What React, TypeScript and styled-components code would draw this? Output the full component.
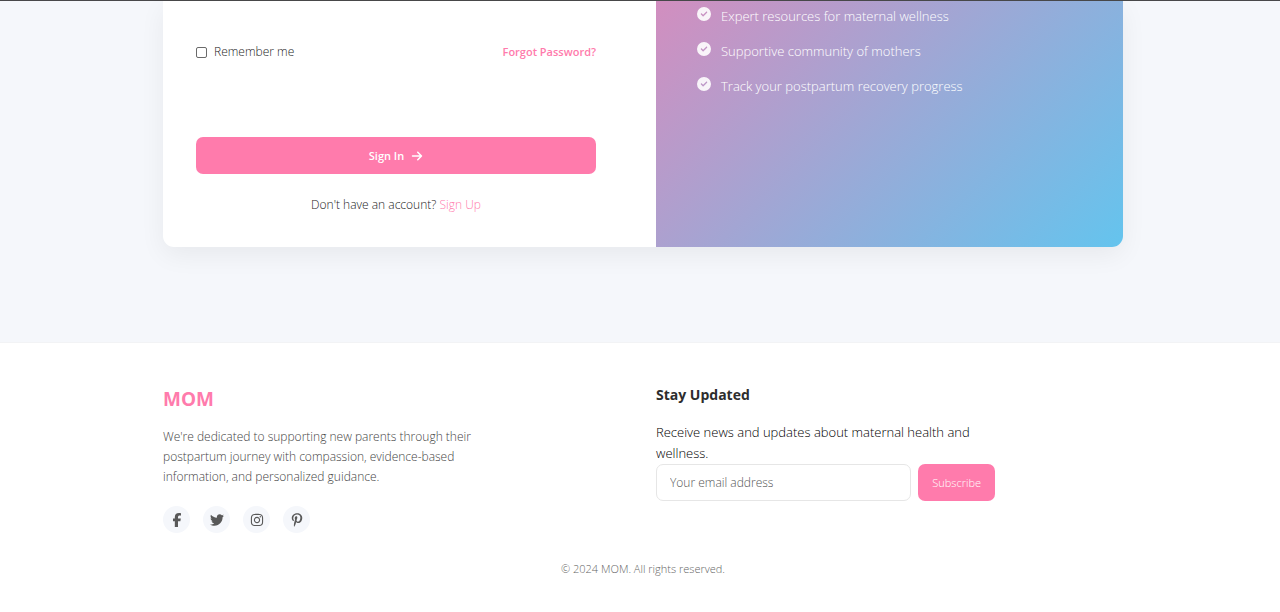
import React from "react";
import styled, { createGlobalStyle, css } from "styled-components";
import {
  FaArrowRight,
  FaCircleCheck,
  FaFacebookF,
  FaInstagram,
  FaPinterestP,
  FaTwitter,
} from "react-icons/fa6";

const pink = "#ff7bac";

const GlobalStyle = createGlobalStyle`
  *, *::before, *::after { box-sizing: border-box; }
  body {
    margin: 0;
    background: #f5f7fb;
    color: #1c1c1c;
    font: 300 13px/22px "Open Sans", "Noto Sans", sans-serif;
  }
  button, input { font: inherit; }
  a { text-decoration: none; }
`;

const Page = styled.div`
  border-top: 1px solid #48484a;
`;

const container = css`
  width: 75%;
  margin: 0 auto;
  position: relative;
  left: 3px;
`;

const Main = styled.main`
  padding-bottom: 95px;
`;

const Card = styled.section`
  ${container}
  display: grid;
  grid-template-columns: 1fr 1fr;
  gap: 26px;
  background: #fff;
  border-radius: 0 0 11px 11px;
  overflow: hidden;
  box-shadow: 0 8px 26px rgba(0, 0, 0, 0.06);
`;

const LoginForm = styled.form`
  padding: 41px 34px 32px 33px;
  font-size: 12px;
  line-height: 20px;
`;

const Options = styled.div`
  display: flex;
  justify-content: space-between;
  align-items: center;
  margin-bottom: 75px;
`;

const Remember = styled.label`
  display: flex;
  align-items: center;
  gap: 7px;
`;

const Checkbox = styled.input`
  appearance: none;
  width: 11px;
  height: 11px;
  margin: 0;
  border: 1px solid #6a6a6a;
  border-radius: 2px;
  background: #fff;
`;

const TextLink = styled.a<{ $weight: number }>`
  color: ${pink};
  font-weight: ${(p) => p.$weight};
`;

const ForgotLink = styled(TextLink)`
  font-size: 11px;
`;

const Button = styled.button<{ $weight: number }>`
  display: flex;
  align-items: center;
  justify-content: center;
  gap: 7px;
  height: 37px;
  padding: 0 14px;
  border: 0;
  border-radius: 7px;
  background: ${pink};
  color: #fff;
  font-size: 11px;
  font-weight: ${(p) => p.$weight};
`;

const SubmitButton = styled(Button)`
  width: 100%;
`;

const SignUpPrompt = styled.p`
  margin: 21px 0 0;
  text-align: center;
`;

const Benefits = styled.ul`
  margin: 0;
  padding: 4px 41px;
  list-style: none;
  background: linear-gradient(135deg, #d28ebf, #64c4ee);
  color: #fff;
  font-weight: 350;
`;

const Benefit = styled.li`
  display: flex;
  align-items: center;
  gap: 10px;
  margin-bottom: 13px;

  svg {
    flex: none;
    margin-bottom: 4px;
    opacity: 0.9;
  }
`;

const Footer = styled.footer`
  padding: 41px 0 33px;
  border-top: 1px solid #f2f3f5;
  background: #fff;
`;

const FooterGrid = styled.div`
  ${container}
  display: grid;
  grid-template-columns: 1fr 1fr;
  gap: 26px;
`;

const Brand = styled.h2`
  margin: 0 0 13px;
  color: ${pink};
  font-size: 19px;
  font-weight: 700;
  line-height: 30px;
`;

const About = styled.p`
  max-width: 320px;
  margin: 0 0 19px;
  color: #444;
  font-size: 12px;
  line-height: 20px;
`;

const Socials = styled.div`
  display: flex;
  gap: 13px;
`;

const SocialLink = styled.a`
  display: grid;
  place-items: center;
  width: 27px;
  height: 27px;
  border-radius: 50%;
  background: #f5f7fb;
  color: #595959;
`;

const Newsletter = styled.section`
  max-width: 339px;
`;

const Heading = styled.h3`
  margin: 0 0 16px;
  color: #2d2d2d;
  font-size: 14px;
  font-weight: 700;
  line-height: 22px;
`;

const Lead = styled.p`
  margin: 0;
  color: #000;
  font-weight: 350;
  line-height: 21px;
`;

const Subscribe = styled.form`
  display: flex;
  gap: 7px;
`;

const EmailInput = styled.input`
  flex: 1;
  min-width: 0;
  height: 37px;
  padding: 0 13px;
  border: 1px solid #e6e6e6;
  border-radius: 7px;
  background: #fff;
  font-size: 12px;

  &::placeholder {
    color: #555;
    opacity: 1;
  }
`;

const Copyright = styled.p`
  ${container}
  margin-top: 26px;
  color: #666;
  font-size: 11px;
  line-height: 20px;
  text-align: center;
`;

const benefits = [
  "Expert resources for maternal wellness",
  "Supportive community of mothers",
  "Track your postpartum recovery progress",
];

const socials = [
  { name: "Facebook", Icon: FaFacebookF },
  { name: "Twitter", Icon: FaTwitter },
  { name: "Instagram", Icon: FaInstagram },
  { name: "Pinterest", Icon: FaPinterestP },
];

export default function App() {
  return (
    <Page>
      <GlobalStyle />
      <Main>
        <Card>
          <LoginForm onSubmit={(e) => e.preventDefault()}>
            <Options>
              <Remember>
                <Checkbox type="checkbox" />
                Remember me
              </Remember>
              <ForgotLink href="#forgot" $weight={600}>
                Forgot Password?
              </ForgotLink>
            </Options>
            <SubmitButton type="submit" $weight={600}>
              Sign In <FaArrowRight size={12} />
            </SubmitButton>
            <SignUpPrompt>
              Don't have an account?{" "}
              <TextLink href="#signup" $weight={300}>
                Sign Up
              </TextLink>
            </SignUpPrompt>
          </LoginForm>
          <Benefits>
            {benefits.map((text) => (
              <Benefit key={text}>
                <FaCircleCheck size={14} />
                {text}
              </Benefit>
            ))}
          </Benefits>
        </Card>
      </Main>
      <Footer>
        <FooterGrid>
          <section>
            <Brand>MOM</Brand>
            <About>
              We're dedicated to supporting new parents through their postpartum
              journey with compassion, evidence-based information, and
              personalized guidance.
            </About>
            <Socials>
              {socials.map(({ name, Icon }) => (
                <SocialLink key={name} href={`#${name}`} aria-label={name}>
                  <Icon size={14} />
                </SocialLink>
              ))}
            </Socials>
          </section>
          <Newsletter>
            <Heading>Stay Updated</Heading>
            <Lead>
              Receive news and updates about maternal health and wellness.
            </Lead>
            <Subscribe onSubmit={(e) => e.preventDefault()}>
              <EmailInput
                type="email"
                aria-label="Your email address"
                placeholder="Your email address"
              />
              <Button type="submit" $weight={300}>
                Subscribe
              </Button>
            </Subscribe>
          </Newsletter>
        </FooterGrid>
        <Copyright>© 2024 MOM. All rights reserved.</Copyright>
      </Footer>
    </Page>
  );
}
